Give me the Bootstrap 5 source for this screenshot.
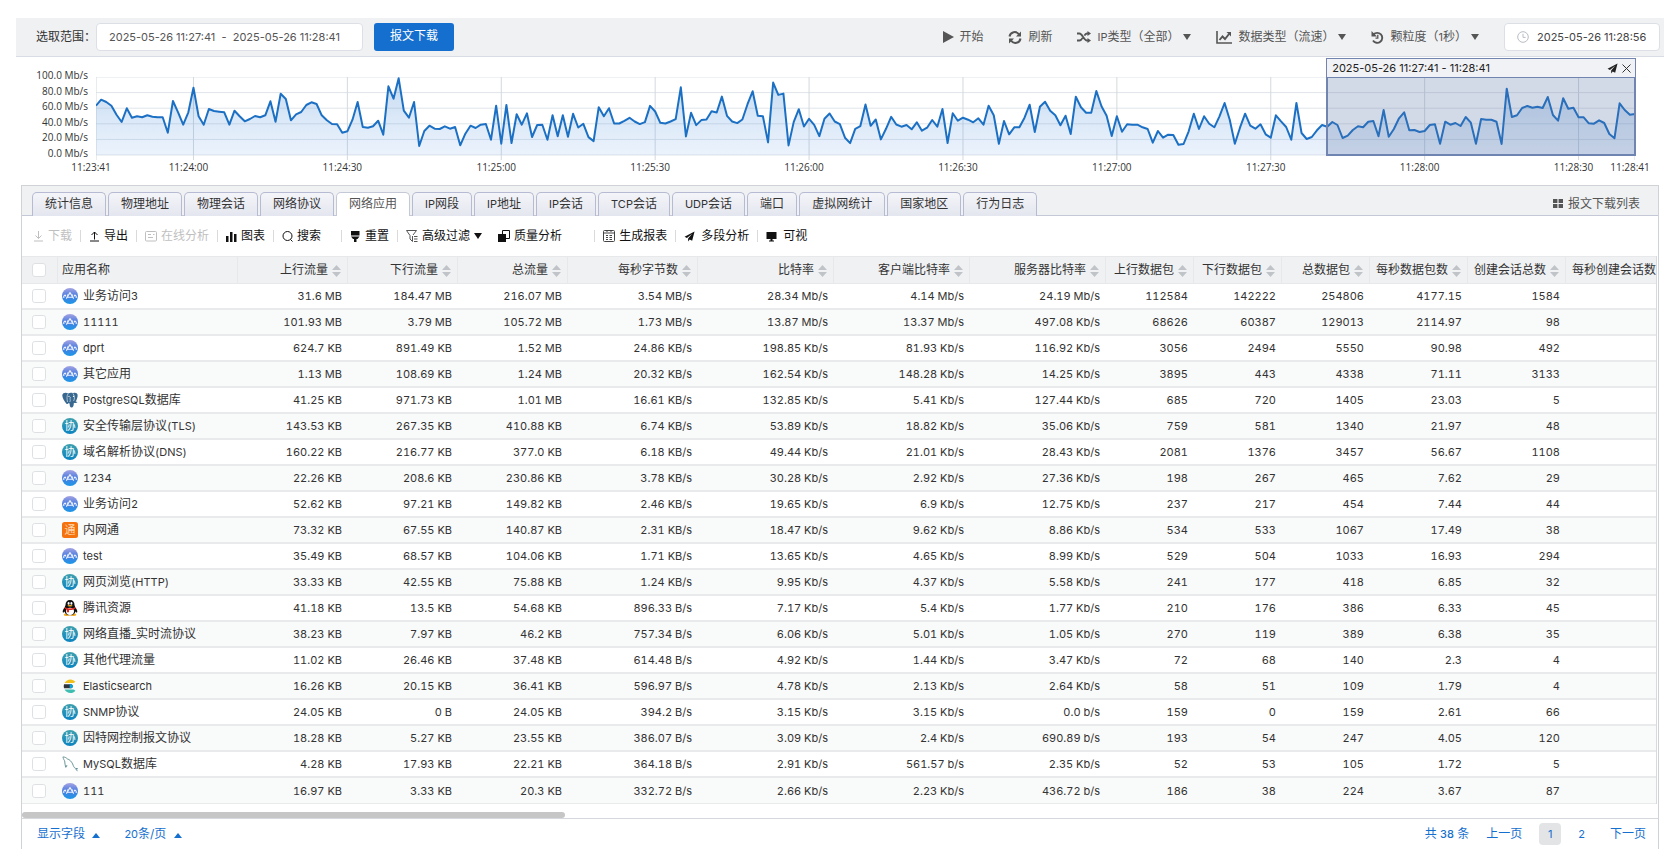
<!DOCTYPE html>
<html lang="zh-CN">
<head>
<meta charset="utf-8">
<meta name="viewport" content="width=device-width, initial-scale=1">
<title>网络应用</title>
<link rel="stylesheet" href="https://cdn.jsdelivr.net/npm/bootstrap@5.3.0/dist/css/bootstrap.min.css">
<style>
:root{--zh:"Noto Sans CJK SC",sans-serif;--brand:#156fce;--line:#cfd2d6;--bar:#f0f1f3}
body{font:12px/18px Inter,var(--zh);color:#333;background:#fff}
svg{display:block;flex:none}
.ltn{font-size:11px}
.page-wrap{padding:18px 8px 12px 16px}
.topbar{background:var(--bar);border-bottom:1px solid #d9dce2;height:39px;padding:0 4px 0 20px}
.field-box{height:28px;border:1px solid #dcdfe6;border-radius:4px;background:#fff;font-size:11px;color:#555;padding:0 12px}
.range-input{width:267px;white-space:pre;margin-right:11px}
.clock-input{width:156px}
.clock-input input{border:0;outline:0;background:none;width:118px;padding:0;color:#444;font-size:11px}
.btn-down{background:var(--brand);color:#fff;font-size:12px;line-height:18px;height:28px;width:80px;padding:0 0 2px;border:0;border-radius:3px}
.acts{gap:25px}
.act{background:none;border:0;padding:0;color:#555;display:flex;align-items:center;gap:6px;white-space:nowrap}
.act.tight{gap:5px}
.act .caret-dn{margin-left:-2px}
.caret-dn,.caret-up{border:4px solid transparent;display:inline-block}
.caret-dn{border-top:6px solid currentColor;border-bottom:0}
.caret-up{border-bottom:5px solid currentColor;border-top:0}
/* traffic chart */
.flow-chart{height:128px;padding:20px 29px 0 80px}
.plot{position:relative;height:78px}
.plot>svg{width:100%;height:84px}
.plot .tick-y,.plot .tick-x{position:absolute;font:10px/14px "Open Sans",sans-serif;color:#333;white-space:nowrap}
.tick-y{right:100%;margin-right:8px;transform:translateY(-9px)}
.tick-x{top:83px;transform:translateX(-50%);margin-left:-5px}
.sel-win{position:absolute;top:-19px;bottom:-1px;right:-1px;width:calc(20% + 2px);border:1px solid #7385ae}
.sel-head{height:18px;background:#f1f2f5;padding:0 4px 0 5px;font-size:11px;color:#222;white-space:nowrap}
.sel-body{height:79px;border:1px solid #6f84b0;border-width:1px 1px 2px 1px;background:rgba(78,106,160,.25)}
/* main panel */
.panel-box{margin:0 5px;border:1px solid var(--line);border-bottom:0}
.panel-box .tabs-bar{background:var(--bar);border:0;border-bottom:1px solid #c5c8d6;padding:6px 18px 0 10px;height:30px;gap:2px;flex-wrap:nowrap}
.panel-box .nav-link{height:24px;padding:0 12px;line-height:22px;font-size:12px;color:#333;border:1px solid #b6bad2;border-bottom:0;border-radius:5px 5px 0 0;background:linear-gradient(#f4f5f9,#e4e6ef);white-space:nowrap;margin:0}
.panel-box .nav-link.active{background:#fff;color:#555;border-color:#c5c8d6}
.tools{height:40px;padding:0 11px}
.tool{background:none;border:0;padding:0;color:#111;display:flex;align-items:center;gap:4px;white-space:nowrap}
.tool.wide{gap:6px}
.tool:disabled{color:#bfbfbf}
.sep-v{width:1px;height:12px;background:#dadada;margin:0 8px}
.sep-v.gap-a{margin-left:20px}
.sep-v.gap-b{margin-left:32px}
.grid-view{overflow:hidden;margin-right:1px;border-right:1px solid #d8dadd}
.grid-view table{width:100%;min-width:1654px;table-layout:fixed;margin:0;color:#333;border-collapse:separate;border-spacing:0}
.grid-view th,.grid-view td{padding:0 6px;height:26px;border:0 solid #e9eaeb;white-space:nowrap;text-align:right;font-weight:400;vertical-align:middle}
.grid-view th{background:var(--bar);height:28px;border-color:#e6e8ea;border-width:1px 1px 1px 0;font-size:12px}
.grid-view td{border-bottom-width:2px;font-size:11px;font-feature-settings:"tnum"}
.grid-view tr:nth-child(even) td{background:#f9fafa}
.grid-view tr:last-child td{border-bottom-width:1px}
.grid-view .c-box{padding:0 0 0 10px;text-align:left}
.grid-view .c-name{padding:0 0 0 4px;text-align:left;font-size:12px}
.app-name{gap:5px}
.form-check-input{display:block;width:14px;height:14px;margin:0;border:1px solid #dee1e4;border-radius:2px}
.sorter{display:inline-block;vertical-align:middle;margin-left:4px}
.hscroll{height:15px;padding-top:8px;border-bottom:1px solid #d5d9dd}
.hscroll div{width:33.2%;height:6px;border-radius:3px;background:#c6c6c6}
.foot{height:30px;padding:0 12px 0 15px}
.foot a,.foot button,.foot span{color:var(--brand);text-decoration:none;background:none;border:0;padding:0}
.pager{gap:17px}
.foot .pg-on{background:#e3e4e6;border-radius:4px;width:22px;height:22px;line-height:22px;text-align:center}
</style>
</head>
<body>
<svg width="0" height="0" class="position-absolute" aria-hidden="true"><defs>
<linearGradient id="gApp" x2="0" y2="1"><stop offset="0" stop-color="#a5a3e2"/><stop offset=".5" stop-color="#4a7ce0"/><stop offset="1" stop-color="#1b98e8"/></linearGradient>
<linearGradient id="gPro" x2="0" y2="1"><stop offset="0" stop-color="#3fa0ae"/><stop offset="1" stop-color="#0b84c0"/></linearGradient>
<linearGradient id="gFlow" x2="0" y2="1"><stop offset="0" stop-color="#1c72c8" stop-opacity=".26"/><stop offset="1" stop-color="#5a96e6" stop-opacity=".12"/></linearGradient>
<symbol id="app" viewBox="0 0 16 16"><circle cx="8" cy="8" r="8" fill="url(#gApp)"/><path d="M1.800 10V8.200l1.400-1.200.8 1.500M14.200 10V8.200l-1.400-1.200-.8 1.500M4.300 10.600 8 4.600l3.700 6M5 9.200h6M5.200 6.600l1 1.500M10.800 6.600l-1 1.500" stroke="#eef3ff" stroke-width="1.100" fill="none" stroke-linejoin="round"/></symbol>
<symbol id="pro" viewBox="0 0 16 16"><circle cx="8" cy="8" r="8" fill="url(#gPro)"/><text x="8" y="12" font-size="11" text-anchor="middle" fill="#fff" font-family="Noto Sans CJK SC">协</text></symbol>
<symbol id="nwt" viewBox="0 0 16 16"><rect width="16" height="16" rx="2.500" fill="#f5730f"/><text x="8" y="12" font-size="11" text-anchor="middle" fill="#ffd9b0" font-family="Noto Sans CJK SC">通</text></symbol>
<symbol id="pg" viewBox="0 0 16 16"><path d="M1.400 1.300C3 .2 5 .9 6.200 1.400 8 .5 9.800.6 11 1.200c2-1 4.300-.4 4.600 1.500.3 2-.9 5.400-2 6.800l1.900.6c-.8 1-2.300 1-3.600.7-.3 1.900-.2 4.200-1.800 4.700-1.900.4-2.400-1-2.500-3.900l-.9-.5c-.8 1.100-1.700 1.300-2.500.4C2.300 9.200.3 5.700.3 3.600c0-1 .4-1.800 1.100-2.300z" fill="#38688f"/><path d="M6 1.800C4.600 3.800 5 7 5.500 10M11 1.600c1.600 2 2 5 .6 7.400M8.400 5c-1 2 .6 3-.6 5" stroke="#c6d8e6" stroke-width=".8" fill="none"/><circle cx="7" cy="4.400" r=".6" fill="#fff"/><circle cx="11.500" cy="4.400" r=".6" fill="#fff"/></symbol>
<symbol id="qq" viewBox="0 0 16 16"><ellipse cx="4.700" cy="14.800" rx="3" ry="1.200" fill="#f3a81c"/><ellipse cx="11.300" cy="14.800" rx="3" ry="1.200" fill="#f3a81c"/><path d="M8 0C5 0 3.500 2 3.500 5c-.3 1-.7 1.500-.7 2.300C1 9.500.3 11.500.9 12.600c.5.300 1.200-.6 1.600-1.100.5 2.300 2.300 3.800 5.500 3.800s5-1.500 5.500-3.800c.4.500 1.100 1.400 1.600 1.100.6-1.100-.1-3.100-1.900-5.300 0-.8-.4-1.300-.7-2.300C12.500 2 11 0 8 0z" fill="#111"/><ellipse cx="8" cy="11.300" rx="4" ry="3.600" fill="#fff"/><ellipse cx="6.600" cy="3.400" rx="1" ry="1.400" fill="#fff"/><ellipse cx="9.400" cy="3.400" rx="1" ry="1.400" fill="#fff"/><ellipse cx="8" cy="5.800" rx="2.600" ry=".8" fill="#f5b21d"/><path d="M3 7.300c3 1.700 7 1.700 10 0l.4 1.500c-2 1-4.400 1.300-6.400 1.200v2.300H4.900V9.600L2.800 8.800z" fill="#e3231c"/></symbol>
<symbol id="es" viewBox="0 0 16 16"><path d="M2.600 5C3.800 2.700 6 1.400 8.400 1.400c2 0 3.800.9 5 2.400C12.600 4.800 11.700 5 10.400 5z" fill="#f0bf1a"/><path d="M2 6.300h7.300a2 2 0 0 1 0 3.900H2a7 7 0 0 1 0-3.900z" fill="#31343b"/><path d="M7.700 6.300h1.600a2 2 0 0 1 0 3.900H7.700z" fill="#07a5de"/><path d="M2.600 11.500h7.800c1.300 0 2.300.4 3 1.300-1.200 1.400-3 2.300-5 2.300-2.400 0-4.700-1.400-5.800-3.600z" fill="#3ebeb0"/></symbol>
<symbol id="my" viewBox="0 0 16 16"><path d="M.8.900c2 .1 3.400.7 4.500 2 2.300.5 4.200 2.700 5.300 5 .8 1.900 1.300 3.700 2.700 4.400l2.300.4-1.700.5 1.600 2M1 1.200c.4 1.800 1 2.800 1.700 3.700.3 2 .2 4.500 1 6.300.8.500 1-1.200 1.100-2.200" stroke="#5b8a8f" stroke-width=".9" fill="none"/></symbol>
<symbol id="plane" viewBox="0 0 12 12"><path d="M11.500.5.6 6.400l2.600 1.200L8.900 3 4.500 8.300v3.200l1.700-2.100 2.700 1.300z" fill="currentColor"/></symbol>
</defs></svg>

<main class="page-wrap">
<header class="topbar d-flex align-items-center">
  <label for="range">选取范围：</label>
  <input id="range" class="field-box range-input" value="2025-05-26 11:27:41  -  2025-05-26 11:28:41">
  <button class="btn btn-down">报文下载</button>
  <div class="d-flex align-items-center ms-auto acts">
    <button class="act tight"><svg width="11" height="12" viewBox="0 0 11 12"><path d="M0 0l11 6-11 6z" fill="currentColor"/></svg>开始</button>
    <button class="act"><svg width="14" height="13" viewBox="0 0 14 13"><path d="M1.500 5.500A5.200 5.200 0 0 1 11 3.500M12.500 7.500A5.200 5.200 0 0 1 3 9.500" stroke="currentColor" stroke-width="2" fill="none"/><path d="M13 .5v5H8zM1 12.500v-5h5z" fill="currentColor"/></svg>刷新</button>
    <button class="act"><svg width="14" height="12" viewBox="0 0 14 12"><path d="M0 2.500h2.500c3 0 4 7 7.500 7h1M0 9.500h2.500C4 9.500 5 8 5.600 6.900M7.400 4.600C8 3.400 9 2.500 10 2.500h1" stroke="currentColor" stroke-width="1.800" fill="none"/><path d="M10.500 0 14 2.500 10.500 5zM10.500 7 14 9.500l-3.500 2.500z" fill="currentColor"/></svg><span><span class="ltn">IP</span>类型（全部）</span><i class="caret-dn"></i></button>
    <button class="act"><svg width="16" height="13" viewBox="0 0 16 13"><path d="M1 0v12h15" stroke="currentColor" stroke-width="1.600" fill="none"/><path d="M3.500 9l3-3.500L9 8l4-5" stroke="currentColor" stroke-width="1.900" fill="none"/><path d="M10.500 1h4.500v4.500z" fill="currentColor"/></svg>数据类型（流速）<i class="caret-dn"></i></button>
    <button class="act"><svg width="13" height="13" viewBox="0 0 13 13"><path d="M2.500 3.500A5 5 0 1 1 2 9.500" stroke="currentColor" stroke-width="1.900" fill="none"/><path d="M.5 0v5.500H6z" fill="currentColor"/><path d="M6.800 3.800v3.400H4.500" stroke="currentColor" stroke-width="1.300" fill="none"/></svg><span>颗粒度（<span class="ltn">1</span>秒）</span><i class="caret-dn"></i></button>
    <div class="field-box clock-input d-flex align-items-center gap-2"><svg width="12" height="12" viewBox="0 0 12 12" fill="none" stroke="#b8bcc4"><circle cx="6" cy="6" r="5.300"/><path d="M6 2.800V6.400h2.600"/></svg><input aria-label="当前时间" value="2025-05-26 11:28:56"></div>
  </div>
</header>

<section class="flow-chart"><div class="plot" id="plot">
  <svg id="flow" viewBox="0 0 300 84" preserveAspectRatio="none"></svg>
  <div class="sel-win"><div class="sel-head d-flex align-items-center"><span class="me-auto">2025-05-26 11:27:41 - 11:28:41</span>
    <svg width="11" height="11" class="me-1"><use href="#plane"/></svg><svg width="9" height="9" viewBox="0 0 9 9"><path d="M.5.500l8 8M8.500.500l-8 8" stroke="#333"/></svg></div><div class="sel-body"></div></div>
</div></section>

<section class="panel-box">
  <nav class="nav nav-tabs tabs-bar" id="tabs"></nav>
  <div class="tools d-flex align-items-center">
    <button class="tool" disabled><svg width="11" height="11" viewBox="0 0 11 11" fill="none" stroke="currentColor"><path d="M5.500 0v7.500M2.500 4.500l3 3 3-3M1 10h9"/></svg>下载</button><i class="sep-v"></i>
    <button class="tool"><svg width="11" height="11" viewBox="0 0 11 11" fill="none" stroke="currentColor"><path d="M5.500 8.500V1M2.500 4l3-3 3 3M1 10h9"/></svg>导出</button><i class="sep-v"></i>
    <button class="tool" disabled><svg width="12" height="11" viewBox="0 0 12 11" fill="none" stroke="currentColor"><rect x=".5" y=".5" width="11" height="9.500" rx="1"/><path d="M3 3.500h3M3 6.500h5M8 3.500h1.500"/></svg>在线分析</button><i class="sep-v"></i>
    <button class="tool"><svg width="11" height="11" viewBox="0 0 11 11" fill="currentColor"><path d="M0 5h2.500v6H0zM4 1h2.500v10H4zM8 3h2.500v8H8z"/></svg>图表</button><i class="sep-v"></i>
    <button class="tool"><svg width="11" height="11" viewBox="0 0 11 11" fill="none" stroke="currentColor"><circle cx="5.500" cy="5" r="4.500"/><path d="M8.500 8.500l2 2"/></svg>搜索</button><i class="sep-v gap-a"></i>
    <button class="tool"><svg width="11" height="11" viewBox="0 0 11 11" fill="currentColor"><path d="M1 0h8.500v4.500H1zM1 5.500h8.500L7.500 8H3zM4 8h2.500v3H4z"/></svg>重置</button><i class="sep-v"></i>
    <button class="tool"><svg width="12" height="12" viewBox="0 0 12 12" fill="none" stroke="#555"><path d="M.5.500h10L7 5M.5.500 4 5.500V9l2.500 2.500V6M8 6.500h3.500M8 9h3.500M8 11.500h3.500"/></svg>高级过滤<i class="caret-dn"></i></button>
    <button class="tool ms-3"><svg width="12" height="12" viewBox="0 0 12 12"><path d="M0 4h8v8H0z" fill="currentColor"/><path d="M4.500 4V.500h7v8H8" stroke="currentColor" fill="none"/></svg>质量分析</button><i class="sep-v gap-b"></i>
    <button class="tool"><svg width="12" height="12" viewBox="0 0 12 12" fill="none" stroke="#444"><rect x=".5" y=".5" width="11" height="11" rx="1"/><path d="M1 3h10M3 5.500h2M6.500 5.500H9M3 7.500h2M6.500 7.500H9M3 9.500h2M6.500 9.500H9M4 0v2M8 0v2"/></svg>生成报表</button><i class="sep-v"></i>
    <button class="tool wide"><svg width="11" height="11"><use href="#plane"/></svg>多段分析</button><i class="sep-v"></i>
    <button class="tool wide"><svg width="11" height="11" viewBox="0 0 11 11" fill="currentColor"><path d="M.5 1h10v7h-10zM4.500 8h2v1.500H8v1H3v-1h1.500z"/></svg>可视</button>
  </div>
  <div class="grid-view"><table><colgroup id="cols"></colgroup><thead><tr id="heads"></tr></thead><tbody id="rows"></tbody></table></div>
  <div class="hscroll"><div></div></div>
  <footer class="foot d-flex align-items-center">
    <button>显示字段 <i class="caret-up ms-1"></i></button>
    <button class="ms-4"><span class="ltn">20</span>条/页 <i class="caret-up ms-1"></i></button>
    <div class="pager d-flex align-items-center ms-auto"><span>共 <b class="fw-medium ltn">38</b> 条</span>
    <a href="#">上一页</a><a href="#" class="pg-on ltn">1</a><a href="#" class="ltn me-2">2</a><a href="#">下一页</a></div>
  </footer>
</section>
</main>

<script>
// One sample per second, 11:23:41 – 11:28:41, in Mb/s
const toVal=(a,zero,span)=>a.map(y=>(zero-y)/span*100);
const flow=[
...toVal([318,300,307,318,345,367,326,354,350,353,347,351,353,353,399,304,338,375,338,264,350,375,328,334,336,338,375,333,350,365,358,349,353,347,305,366,282,298,362,344,337,316,308,313,347,362,373,374,399,395,360,307,382,384,380,363,405,260,297,236,333,354,307,439,394,378,387,388,380,387,382,437,402,378,385,375,373,420,318,432,316,430,344,375,341,412,376,375,420,347,410],466,234),
...toVal([167,232,163,204,193,233,245,143,170,146,192,192,184,175,186,194,188,139,156,190,192,186,179,83,231,160,197,182,180,155,159,111,169,186,191,180,134,95,169,170,249,69,106,102,258,188,149,201,178,196,230,178,162,186,194,235,251,208,200,135,199,180,240,208,172,195],287,235),
...toVal([381,376,389,368,393,384,361,381,328,430,341,363,354,360,368,356,375,318,347,432,364,404,383,383,354,315,397,321,306,333,347,377,348,403,291,323,339,339,274,320,348,409,350,396,374,375,375,383,388,429,394,414,405,406,435,433,395,342,388,350,372,383,350,310,360,432,384,342,378,387,374,404,414,347,365,382,420,310,400,418,412,392,376,381,367,376,415,408,391,380,383,366,364,410,331,411,388,356,338,392,391,397,394,376,374,432,366,375,370,379,352,369,432,358,360,360,366,433,267,352,347,325,319,324,321,325,292,346,363,296,327,324,353,353,371,372,362,370,403,416,311,331,345,343],466,234)];
const H=78,pts=flow.map((v,i)=>i+','+(H-v*H/100).toFixed(1)).join(' ');
const ticks=[[0,'11:23:41'],[19,'11:24:00'],[49,'11:24:30'],[79,'11:25:00'],[109,'11:25:30'],[139,'11:26:00'],[169,'11:26:30'],[199,'11:27:00'],[229,'11:27:30'],[259,'11:28:00'],[289,'11:28:30'],[300,'11:28:41']];
let g='';
for(let k=0;k<=5;k++)g+=`<path d="M0 ${k*15.6}H300" stroke="#e0e5e9" vector-effect="non-scaling-stroke"/>`;
ticks.forEach(([t])=>g+=`<path d="M${t} 0V83" stroke="#d3d9de" vector-effect="non-scaling-stroke"/>`);
g+=`<polygon points="0,${H} ${pts} 300,${H}" fill="url(#gFlow)"/><polyline points="${pts}" fill="none" stroke="#1c70c4" stroke-width="2" stroke-linejoin="round" vector-effect="non-scaling-stroke"/>`;
document.getElementById('flow').innerHTML=g;
let lab='';
for(let k=0;k<=5;k++)lab+=`<span class="tick-y" style="top:${k*20}%">${100-k*20}.0 Mb/s</span>`;
ticks.forEach(([t,s])=>lab+=`<span class="tick-x" style="left:${(t/3).toFixed(2)}%">${s}</span>`);
document.getElementById('plot').insertAdjacentHTML('beforeend',lab);

const mix=s=>s.replace(/[\x21-\x7e]+/g,m=>`<span class="ltn">${m}</span>`);
document.getElementById('tabs').innerHTML='统计信息,物理地址,物理会话,网络协议,网络应用,IP网段,IP地址,IP会话,TCP会话,UDP会话,端口,虚拟网统计,国家地区,行为日志'.split(',').map(t=>`<a href="#" class="nav-link${t=='网络应用'?' active':''}">${mix(t)}</a>`).join('')+'<button class="act tight ms-auto align-self-center"><svg width="10" height="9" viewBox="0 0 10 9" fill="#555"><path d="M0 0h4.400v4H0zM5.600 0H10v4H5.600zM0 5h4.400v4H0zM5.600 5H10v4H5.600z"/></svg>报文下载列表</button>';

document.getElementById('cols').innerHTML=[36,180,110,110,110,130,136,136,136,88,88,88,98,98,110].map(w=>`<col style="width:${w}px">`).join('');
const sorter='<svg class="sorter" width="9" height="12" viewBox="0 0 9 12" fill="#c0c4c8"><path d="M4.500 0 9 5H0zM0 7h9l-4.500 5z"/></svg>';
document.getElementById('heads').innerHTML='<th class="c-box"><input type="checkbox" class="form-check-input" aria-label="全选"></th><th class="c-name">应用名称</th>'+'上行流量,下行流量,总流量,每秒字节数,比特率,客户端比特率,服务器比特率,上行数据包,下行数据包,总数据包,每秒数据包数,创建会话总数,每秒创建会话数'.split(',').map(t=>`<th>${t}${sorter}</th>`).join('');
const data=`app|业务访问3|31.6 MB|184.47 MB|216.07 MB|3.54 MB/s|28.34 Mb/s|4.14 Mb/s|24.19 Mb/s|112584|142222|254806|4177.15|1584|26
app|11111|101.93 MB|3.79 MB|105.72 MB|1.73 MB/s|13.87 Mb/s|13.37 Mb/s|497.08 Kb/s|68626|60387|129013|2114.97|98|
app|dprt|624.7 KB|891.49 KB|1.52 MB|24.86 KB/s|198.85 Kb/s|81.93 Kb/s|116.92 Kb/s|3056|2494|5550|90.98|492|
app|其它应用|1.13 MB|108.69 KB|1.24 MB|20.32 KB/s|162.54 Kb/s|148.28 Kb/s|14.25 Kb/s|3895|443|4338|71.11|3133|52
pg|PostgreSQL数据库|41.25 KB|971.73 KB|1.01 MB|16.61 KB/s|132.85 Kb/s|5.41 Kb/s|127.44 Kb/s|685|720|1405|23.03|5|
pro|安全传输层协议(TLS)|143.53 KB|267.35 KB|410.88 KB|6.74 KB/s|53.89 Kb/s|18.82 Kb/s|35.06 Kb/s|759|581|1340|21.97|48|
pro|域名解析协议(DNS)|160.22 KB|216.77 KB|377.0 KB|6.18 KB/s|49.44 Kb/s|21.01 Kb/s|28.43 Kb/s|2081|1376|3457|56.67|1108|
app|1234|22.26 KB|208.6 KB|230.86 KB|3.78 KB/s|30.28 Kb/s|2.92 Kb/s|27.36 Kb/s|198|267|465|7.62|29|
app|业务访问2|52.62 KB|97.21 KB|149.82 KB|2.46 KB/s|19.65 Kb/s|6.9 Kb/s|12.75 Kb/s|237|217|454|7.44|44|
nwt|内网通|73.32 KB|67.55 KB|140.87 KB|2.31 KB/s|18.47 Kb/s|9.62 Kb/s|8.86 Kb/s|534|533|1067|17.49|38|
app|test|35.49 KB|68.57 KB|104.06 KB|1.71 KB/s|13.65 Kb/s|4.65 Kb/s|8.99 Kb/s|529|504|1033|16.93|294|
pro|网页浏览(HTTP)|33.33 KB|42.55 KB|75.88 KB|1.24 KB/s|9.95 Kb/s|4.37 Kb/s|5.58 Kb/s|241|177|418|6.85|32|
qq|腾讯资源|41.18 KB|13.5 KB|54.68 KB|896.33 B/s|7.17 Kb/s|5.4 Kb/s|1.77 Kb/s|210|176|386|6.33|45|
pro|网络直播_实时流协议|38.23 KB|7.97 KB|46.2 KB|757.34 B/s|6.06 Kb/s|5.01 Kb/s|1.05 Kb/s|270|119|389|6.38|35|
pro|其他代理流量|11.02 KB|26.46 KB|37.48 KB|614.48 B/s|4.92 Kb/s|1.44 Kb/s|3.47 Kb/s|72|68|140|2.3|4|
es|Elasticsearch|16.26 KB|20.15 KB|36.41 KB|596.97 B/s|4.78 Kb/s|2.13 Kb/s|2.64 Kb/s|58|51|109|1.79|4|
pro|SNMP协议|24.05 KB|0 B|24.05 KB|394.2 B/s|3.15 Kb/s|3.15 Kb/s|0.0 b/s|159|0|159|2.61|66|
pro|因特网控制报文协议|18.28 KB|5.27 KB|23.55 KB|386.07 B/s|3.09 Kb/s|2.4 Kb/s|690.89 b/s|193|54|247|4.05|120|
my|MySQL数据库|4.28 KB|17.93 KB|22.21 KB|364.18 B/s|2.91 Kb/s|561.57 b/s|2.35 Kb/s|52|53|105|1.72|5|
app|111|16.97 KB|3.33 KB|20.3 KB|332.72 B/s|2.66 Kb/s|2.23 Kb/s|436.72 b/s|186|38|224|3.67|87|`;
document.getElementById('rows').innerHTML=data.split('\n').map(r=>{const[ic,name,...v]=r.split('|');
return `<tr><td class="c-box"><input type="checkbox" class="form-check-input" aria-label="${name}"></td><td class="c-name"><div class="app-name d-flex align-items-center"><svg width="16" height="16"><use href="#${ic}"/></svg><span>${mix(name)}</span></div></td>${v.map(x=>`<td>${x}</td>`).join('')}</tr>`}).join('');
</script>
<script src="https://cdn.jsdelivr.net/npm/bootstrap@5.3.0/dist/js/bootstrap.bundle.min.js"></script>
</body>
</html>
